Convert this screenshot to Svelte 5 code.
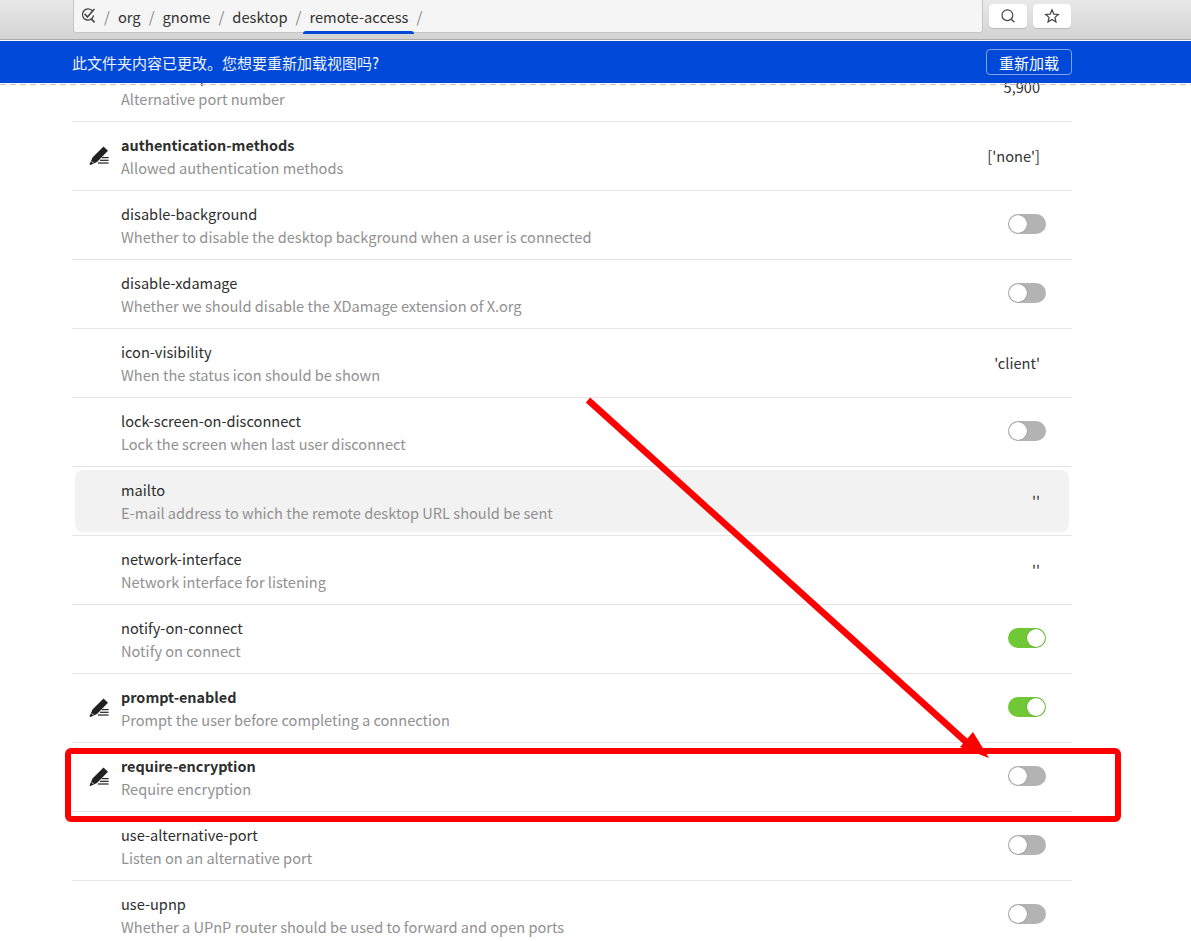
<script>
    const crumbs = ["org", "gnome", "desktop", "remote-access"];

    const rows = [
        { name: "alternative-port", desc: "Alternative port number", value: "5,900" },
        { name: "authentication-methods", desc: "Allowed authentication methods", value: "['none']", edited: true },
        { name: "disable-background", desc: "Whether to disable the desktop background when a user is connected", toggle: false },
        { name: "disable-xdamage", desc: "Whether we should disable the XDamage extension of X.org", toggle: false },
        { name: "icon-visibility", desc: "When the status icon should be shown", value: "'client'" },
        { name: "lock-screen-on-disconnect", desc: "Lock the screen when last user disconnect", toggle: false },
        { name: "mailto", desc: "E-mail address to which the remote desktop URL should be sent", value: "''", hover: true },
        { name: "network-interface", desc: "Network interface for listening", value: "''" },
        { name: "notify-on-connect", desc: "Notify on connect", toggle: true },
        { name: "prompt-enabled", desc: "Prompt the user before completing a connection", toggle: true, edited: true },
        { name: "require-encryption", desc: "Require encryption", toggle: false, edited: true },
        { name: "use-alternative-port", desc: "Listen on an alternative port", toggle: false },
        { name: "use-upnp", desc: "Whether a UPnP router should be used to forward and open ports", toggle: false }
    ];
</script>

<main class="page">
    <header class="toolbar">
        <div class="pathbar">
            <svg class="root-icon" width="15" height="15" viewBox="0 0 15 15" fill="none" stroke="#444" stroke-width="1.3">
                <path d="M11.6 3.2A5.6 5.6 0 1 0 12.6 7.4" />
                <path d="M3.6 5.8l2.8 3.2L13.4 1" stroke-width="1.6" />
                <path d="M10 10.6l3.6 3.8" stroke-width="1.6" />
            </svg>
            <span class="sep">/</span>
            {#each crumbs as crumb, i}
                <span class="crumb" class:current={i == crumbs.length - 1}>{crumb}</span>
                <span class="sep">/</span>
            {/each}
        </div>
        <button class="tool">
            <svg width="16" height="16" viewBox="0 0 16 16" fill="none" stroke="#444" stroke-width="1.2">
                <circle cx="7.4" cy="7.2" r="5.4" />
                <path d="M11.2 11.2l3.2 3" />
            </svg>
        </button>
        <button class="tool">
            <svg width="16" height="16" viewBox="0 0 16 16" fill="none" stroke="#444" stroke-width="1.2">
                <path d="M8 1.8l1.8 4.3 4.6.3-3.5 3 1.1 4.5L8 11.5l-4 2.4 1.1-4.5-3.5-3 4.6-.3z" />
            </svg>
        </button>
    </header>

    <div class="banner">
        <span>此文件夹内容已更改。您想要重新加载视图吗?</span>
        <button class="reload">重新加载</button>
    </div>

    <div class="scroller">
        <div class="undershoot"></div>
        <ul class="list">
            {#each rows as row}
                <li class="row">
                    <div class="row-inner" class:hover={row.hover}>
                        <div class="edit-slot">
                            {#if row.edited}
                                <svg width="20" height="20" viewBox="0 0 20 20" fill="#222">
                                    <path d="M14.5.5L19 4.7 8 16l-6.5 3-1-.5 3-7z" />
                                    <path d="M2.8 15.4l1.8 1.8" stroke="#fff" stroke-width="1" />
                                    <rect x="12.8" y="11" width="6.8" height="1.2" />
                                    <rect x="11" y="13.7" width="8.6" height="1.2" />
                                    <rect x="9" y="16.4" width="10.6" height="1.2" />
                                </svg>
                            {/if}
                        </div>
                        <div class="text">
                            <div class="name" class:bold={row.edited}>{row.name}</div>
                            <div class="desc">{row.desc}</div>
                        </div>
                        {#if row.toggle !== undefined}
                            <span class="switch" class:on={row.toggle}><span class="knob"></span></span>
                        {:else}
                            <span class="value">{row.value}</span>
                        {/if}
                    </div>
                </li>
            {/each}
        </ul>
    </div>

    <svg class="annotation" width="1191" height="941" viewBox="0 0 1191 941">
        <path d="M588 400L975 750" stroke="#f00" stroke-width="6.5" fill="none" />
        <path d="M989 758L960 747 973 732z" fill="#f00" />
        <rect x="68" y="751" width="1050" height="68" rx="3" fill="none" stroke="#f00" stroke-width="6" />
    </svg>
</main>

<style>
    :global(body) {
        margin: 0;
        background: #fff;
        font-family: "Noto Sans CJK SC", "Noto Sans", sans-serif;
    }
    .page {
        position: relative;
        width: 1191px;
        height: 941px;
        overflow: hidden;
        display: flex;
        flex-direction: column;
    }
    .toolbar {
        height: 40px;
        flex: none;
        box-sizing: border-box;
        display: flex;
        align-items: flex-start;
        padding-left: 73px;
        background: linear-gradient(#e9e9e9, #d3d3d3);
        border-bottom: 1px solid #a9a9a9;
        margin-bottom: 1px;
    }
    .pathbar {
        position: relative;
        width: 910px;
        height: 33px;
        box-sizing: border-box;
        display: flex;
        align-items: center;
        padding-left: 7px;
        background: #f5f5f5;
        border: 1px solid #c4c4c4;
        border-top: none;
        border-radius: 0 0 3px 3px;
        font-size: 14.7px;
        color: #333;
    }
    .root-icon {
        flex: none;
        margin-bottom: 1px;
    }
    .sep {
        margin: 0 8px;
        color: #888;
        font-size: 15px;
    }
    .crumb {
        position: relative;
    }
    .crumb.current::after {
        content: "";
        position: absolute;
        left: -6px;
        right: -6px;
        bottom: -7px;
        height: 3px;
        background: #0049d8;
        border-radius: 3px 3px 0 0;
    }
    .tool {
        width: 38px;
        height: 24px;
        margin: 4px 0 0 6px;
        padding: 0;
        display: flex;
        align-items: center;
        justify-content: center;
        background: #fff;
        border: none;
        border-radius: 4px;
        box-shadow: 0 1px 1px rgba(0, 0, 0, 0.15);
    }
    .banner {
        flex: none;
        height: 42px;
        box-sizing: border-box;
        display: flex;
        align-items: center;
        justify-content: space-between;
        padding: 0 119px 0 72px;
        background: #0049d8;
        color: #f0f4ff;
        font-size: 15px;
        position: relative;
        z-index: 2;
    }
    .reload {
        width: 86px;
        height: 26px;
        padding: 0;
        background: transparent;
        border: 1px solid #7fa2ea;
        border-radius: 4px;
        color: #fff;
        font: inherit;
    }
    .scroller {
        position: relative;
        flex: 1;
        overflow: hidden;
    }
    .undershoot {
        position: absolute;
        left: 0;
        right: 0;
        top: 1px;
        height: 1px;
        background: repeating-linear-gradient(90deg, #c4c4c4 0 6px, transparent 6px 10px);
        z-index: 1;
    }
    .list {
        list-style: none;
        margin: -30px 119px 0 72px;
        padding: 0;
    }
    .row {
        height: 69px;
        box-sizing: border-box;
        border-bottom: 1px solid #e5e5e5;
        padding: 3px;
    }
    .row-inner {
        height: 62px;
        display: flex;
        align-items: center;
        padding-right: 23px;
        border-radius: 8px;
    }
    .row-inner.hover {
        background: #f2f2f2;
    }
    .edit-slot {
        width: 46px;
        flex: none;
        display: flex;
        justify-content: flex-end;
        box-sizing: border-box;
    }
    .edit-slot svg {
        margin-right: 12px;
        margin-bottom: 1px;
    }
    .text {
        flex: 1;
        min-width: 0;
        line-height: 23px;
    }
    .name {
        font-size: 14.6px;
        color: #2e2e2e;
    }
    .name.bold {
        font-size: 14.4px;
        font-weight: 700;
    }
    .desc {
        font-size: 14.6px;
        color: #919191;
    }
    .value {
        font-size: 14.6px;
        color: #333;
        margin-right: 6px;
        margin-bottom: 2px;
    }
    .switch {
        width: 38px;
        height: 20px;
        box-sizing: border-box;
        border-radius: 10px;
        background: #b3b3b3;
        padding: 1px;
        margin-bottom: 2px;
        display: flex;
        flex: none;
    }
    .switch.on {
        background: #71c837;
        justify-content: flex-end;
    }
    .knob {
        width: 18px;
        height: 18px;
        border-radius: 50%;
        background: #fff;
        box-shadow: 0 0 1px rgba(0, 0, 0, 0.5);
    }
    .annotation {
        position: absolute;
        left: 0;
        top: 0;
        z-index: 3;
        pointer-events: none;
    }
</style>
